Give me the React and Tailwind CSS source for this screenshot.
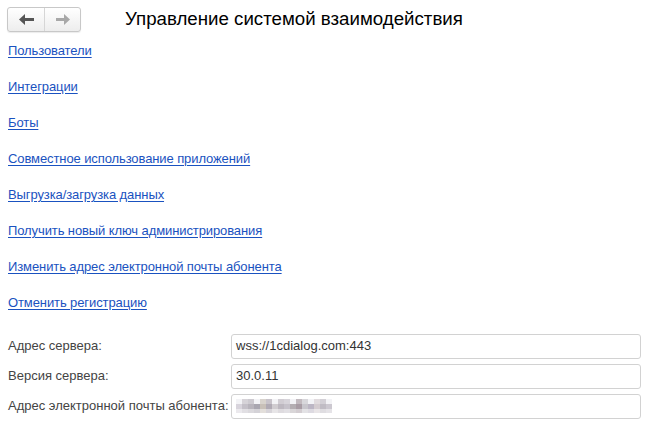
import React from 'react';

const links = [
  'Пользователи',
  'Интеграции',
  'Боты',
  'Совместное использование приложений',
  'Выгрузка/загрузка данных',
  'Получить новый ключ администрирования',
  'Изменить адрес электронной почты абонента',
  'Отменить регистрацию',
];

const blurColors = [
  '#d8d4dc', '#c4c0c8', '#b8b4bc', '#a9a6b0', '#c8c0b8', '#b0aab4', '#d0ccd0', '#bdb8c0',
  '#c6c2ca', '#b4aeb2', '#a89ca4', '#c8c6cc', '#bcb6c4', '#d4ccd0', '#c0bcc4', '#ccc8d0',
];

function Field({ label, children }) {
  return (
    <div className="flex items-center h-[30px]">
      <div className="w-[223px] text-[13px] text-[#444]">{label}</div>
      <div className="w-[410px] h-[25px] border border-[#d2d2d2] rounded-[3px] bg-white flex items-center px-[4px] text-[13px] text-[#333]">
        {children}
      </div>
    </div>
  );
}

export default function App() {
  return (
    <div className="w-[669px] h-[433px] bg-white overflow-hidden" style={{ fontFamily: '"Liberation Sans", Arial, sans-serif' }}>
      {/* header */}
      <div className="flex items-center pt-[7px] pl-[7px]">
        <div className="flex w-[74px] h-[25px] border border-[#c8c8c8] rounded-[3px] bg-gradient-to-b from-white to-[#ededed] shadow-[0_1px_1px_rgba(0,0,0,0.08)]">
          <div className="w-[37px] flex items-center justify-center border-r border-[#d6d6d6]">
            <svg width="15" height="11" viewBox="0 0 15 11">
              <path d="M0 5.5 L6 0 L6 4 L15 4 L15 7 L6 7 L6 11 Z" fill="#555" />
            </svg>
          </div>
          <div className="flex-1 flex items-center justify-center">
            <svg width="14" height="11" viewBox="0 0 14 11">
              <path d="M14 5.5 L8 0 L8 4 L0 4 L0 7 L8 7 L8 11 Z" fill="#a8a8a8" />
            </svg>
          </div>
        </div>
        <h1 className="ml-[44px] text-[18.7px] text-black leading-none">Управление системой взаимодействия</h1>
      </div>

      {/* links */}
      <div className="flex flex-col pl-[8px] mt-[11px]">
        {links.map((l) => (
          <a key={l} href="#" className="h-[36px] text-[13px] leading-[16px] tracking-[-0.1px] text-[#1a52c0] underline underline-offset-[2px] w-fit">
            {l}
          </a>
        ))}
      </div>

      {/* fields */}
      <div className="flex flex-col pl-[8px]">
        <Field label="Адрес сервера:">wss://1cdialog.com:443</Field>
        <Field label="Версия сервера:">30.0.11</Field>
        <Field label="Адрес электронной почты абонента:">
          <div className="flex flex-col">
            <div className="flex">
              {blurColors.map((c, i) => (
                <div key={i} className="w-[6px] h-[5px]" style={{ background: i % 3 === 0 ? '#eeeef2' : c, opacity: 0.7 }} />
              ))}
            </div>
            <div className="flex">
              {blurColors.map((c, i) => (
                <div key={i} className="w-[6px] h-[5px]" style={{ background: c }} />
              ))}
            </div>
            <div className="flex">
              {blurColors.map((c, i) => (
                <div key={i} className="w-[6px] h-[4px]" style={{ background: c, opacity: 0.5 }} />
              ))}
            </div>
          </div>
        </Field>
      </div>
    </div>
  );
}
